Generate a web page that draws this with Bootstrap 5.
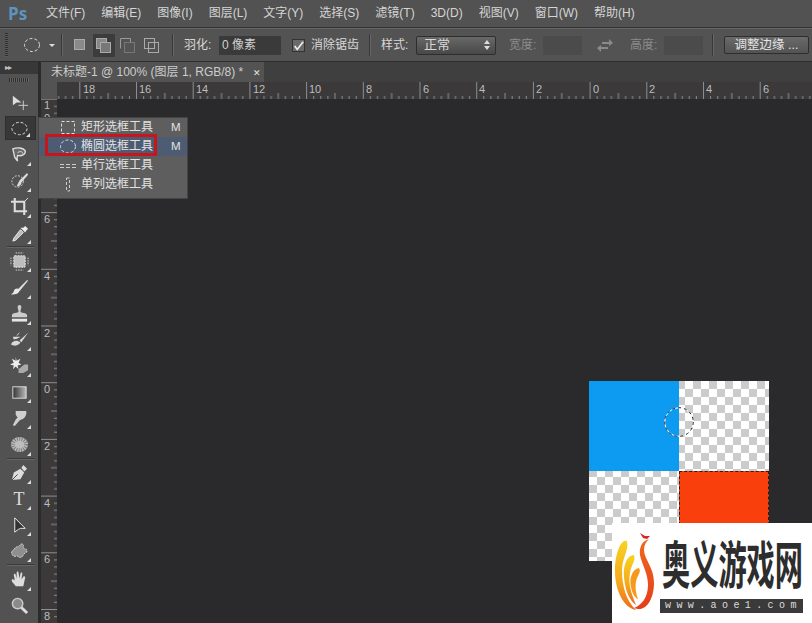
<!DOCTYPE html>
<html lang="zh"><head><meta charset="utf-8"><title>Ps</title>
<link href="https://cdn.jsdelivr.net/npm/bootstrap@5.3.0/dist/css/bootstrap.min.css" rel="stylesheet">
<style>
html,body{margin:0;height:623px;overflow:hidden;background:#2a292b}
.ps-app{width:812px;height:623px;font:12px/1.2 "Liberation Sans","Noto Sans CJK SC",sans-serif;color:#d8d8d8;overflow:hidden;position:relative}
.ps-menubar{height:28px;background:#525252;padding-left:8px;border-bottom:1px solid #333}
.ps-logo{font:bold 17px/1 "Open Sans",sans-serif;color:#5d93bd;width:38px}
.ps-menu{gap:16px;font-size:12px;color:#d5d5d5}
.ps-opts{height:34px;background:#535353;border-top:1px solid #656565;border-bottom:1px solid #2e2e2e;padding-left:5px;color:#d8d8d8}
.ps-grip{width:3px;height:24px;background:repeating-linear-gradient(#2e2e2e 0 1px,#5c5c5c 1px 2px);margin-right:15px}
.ps-arrow{margin-left:7px}
.ps-div{width:2px;height:22px;flex:none;background:#383838;border-right:1px solid #666}
.ps-d1{margin-left:5px}
.ps-o1{margin-left:6px}
.ps-o2,.ps-o3,.ps-o4{margin-left:2px}
.ps-d2{margin-left:9px}
.ps-lbl{font-size:12px;white-space:nowrap;flex:none}
.ps-l1{margin-left:10px;width:35px}
.ps-field{height:19px;width:62px;flex:none;background:#3a3a3a;font-size:12px;padding-left:3px;line-height:19px;color:#d0d0d0}
.ps-dim{color:#8b8b8b}
.ps-field-off{height:19px;width:39px;flex:none;background:#4b4b4b}
.ps-opmode{width:22px;height:23px;flex:none}
.ps-opmode-on{background:#3c3c3c}
.ps-check{width:13px;height:13px;flex:none;background:#6a6a6a;border:1px solid #333;margin-left:11px}
.ps-l2{margin-left:6px;width:48px}
.ps-d3{margin-left:10px}
.ps-l3{margin-left:10px;width:35px}
.ps-select{width:80px;height:19px;flex:none;background:linear-gradient(#686868,#484848);border:1px solid #2e2e2e;border-radius:2px;font-size:13px;padding:0 5px 0 7px}
.ps-l4{margin-left:13px;width:34px}
.ps-sw{margin-left:15px;flex:none}
.ps-l5{margin-left:17px;width:34px}
.ps-d4{margin-left:9px}
.ps-refine{width:85px;height:18px;flex:none;margin-left:10px;background:linear-gradient(#6a6a6a,#535353);border:1px solid #2e2e2e;border-radius:2px;font-size:12.5px;color:#e4e4e4}
.ps-body{height:561px}
.ps-tools{width:41px;background:#525252;border-right:3px solid #2b2b2b}
.ps-toolhead{height:12px;background:#383838;font-size:8px;padding-left:5px;color:#c4c4c4;line-height:11px;letter-spacing:-1px}
.ps-toolgrip{height:4px;margin:4px 9px 0;background:repeating-linear-gradient(90deg,#2c2c2c 0 1px,#666 1px 2px)}
.ps-toollist{padding:0 2px 0 5px;margin-top:7px;height:538px}
.ps-tool{height:26.2px;flex:none;position:relative;padding-right:3px}
.ps-tool svg{width:19px;height:19px;display:block}
.ps-tool::after{content:"";position:absolute;right:5px;bottom:2px;border:2px solid transparent;border-right-color:#ddd;border-bottom-color:#ddd}
.ps-tool.ps-noarrow::after{display:none}
.ps-tool-on{background:#383838;border:1px solid #2f2f2f;height:24.2px;margin:1px 0}
.ps-type{font:18px/1 "Liberation Serif",serif;color:#ddd}
.ps-sep{height:2px;background:#3a3a3a;border-bottom:1px solid #666;margin:0 2px;flex:none}
.ps-main{background:#2a292b;position:relative;min-width:0}
.ps-tabbar{height:20px;background:#3f3f3f}
.ps-tab{width:223px;background:#535353;padding-left:10px;font-size:12px;line-height:20px;color:#cdcdcd;white-space:nowrap}
.ps-tabx{font-size:9px;color:#e6e6e6;margin-left:6px}
.ps-rulers{height:17px}
.ps-corner{width:16px;background:#535353;flex:none}
.ps-hruler{display:block;background:#3b393a;flex:none}
.ps-vruler{display:block;background:#3b393a;width:16px;flex:none}
.ps-view{position:relative;height:524px}
.ps-rtext{font:11px "Liberation Sans",sans-serif;fill:#bdbdbd}
.ps-doc{position:absolute;left:548px;top:282px;width:180px;height:180px;background:repeating-conic-gradient(#cbcbcb 0 25%,#fff 0 50%) 0 0/16px 16px}
.ps-blue{position:absolute;left:0;top:0;width:90px;height:90px;background:#0d9bf2}
.ps-red{position:absolute;left:90px;top:90px;width:90px;height:90px;background:#f93f0b;outline:1px dashed #222;outline-offset:-1px}
.ps-marq{position:absolute;left:75px;top:26px}
.ps-fly{position:absolute;left:38px;top:117px;width:150px;height:82px;background:#5e5e5e;border:1px solid #444;z-index:5;color:#e2e2e2}
.ps-row{height:19px;padding-left:42px;line-height:19px;font-size:12px;white-space:nowrap;position:relative}
.ps-row-on{background:#4d5c73}
.ps-rowicon{position:absolute;left:20px;top:2px;width:18px;height:15px}
.ps-key{margin-left:17px;font-size:11.5px}
.ps-rowtext{width:73px;display:inline-block}
.ps-hl{position:absolute;left:45px;top:134px;width:112px;height:22px;border:3px solid #c4161c;z-index:6}
.ps-mark{position:absolute;left:612px;top:523px;width:200px;height:100px;background:#fff;z-index:7}
.ps-mcol{padding:14px 0 10px}
.ps-marktext{font:700 28.2px/28px "Noto Sans CJK SC",serif;color:#2d2d2d;white-space:nowrap;margin-left:2px;transform:scaleY(1.8);transform-origin:top}
.ps-markurl{width:143px;height:14px;background:#3a3a3a;color:#ddd;font:10px/14px "Liberation Mono",monospace;letter-spacing:5.4px;padding-left:5px;white-space:nowrap;overflow:hidden}
</style></head><body>
<div class="ps-app d-flex flex-column">
  <div class="ps-menubar d-flex align-items-center">
    <div class="ps-logo">Ps</div>
    <div class="ps-menu d-flex">
      <span>文件(F)</span><span>编辑(E)</span><span>图像(I)</span><span>图层(L)</span><span>文字(Y)</span><span>选择(S)</span><span>滤镜(T)</span><span>3D(D)</span><span>视图(V)</span><span>窗口(W)</span><span>帮助(H)</span>
    </div>
  </div>
  <div class="ps-opts d-flex align-items-center">
    <div class="ps-grip"></div>
    <svg width="18" height="16" viewBox="0 0 18 16"><ellipse cx="9" cy="8" rx="7.5" ry="6.5" fill="none" stroke="#ddd" stroke-dasharray="3 2"/></svg>
    <svg class="ps-arrow" width="8" height="6" viewBox="0 0 8 6"><path d="M1 2h6L4 5z" fill="#ddd"/></svg>
    <div class="ps-div ps-d1"></div>
    <div class="ps-opmode ps-o1 d-flex align-items-center justify-content-center"><svg width="12" height="12"><rect x=".5" y=".5" width="10" height="10" fill="#8a8a8a" stroke="#aaa"/></svg></div>
    <div class="ps-opmode ps-o2 ps-opmode-on d-flex align-items-center justify-content-center"><svg width="16" height="15"><rect x=".5" y=".5" width="10" height="10" fill="#888" stroke="#aaa"/><rect x="4.5" y="4.5" width="10" height="10" fill="#777" stroke="#aaa"/></svg></div>
    <div class="ps-opmode ps-o3 d-flex align-items-center justify-content-center"><svg width="16" height="15"><path d="M.5 10.5V.5h10v4" fill="none" stroke="#999"/><rect x="4.5" y="4.5" width="10" height="10" fill="#555" stroke="#777"/></svg></div>
    <div class="ps-opmode ps-o4 d-flex align-items-center justify-content-center"><svg width="16" height="15"><rect x=".5" y=".5" width="10" height="10" fill="none" stroke="#aaa"/><rect x="4.5" y="4.5" width="10" height="10" fill="none" stroke="#aaa"/></svg></div>
    <div class="ps-div ps-d2"></div>
    <span class="ps-lbl ps-l1">羽化:</span>
    <div class="ps-field">0 像素</div>
    <div class="ps-check d-flex"><svg width="13" height="13" viewBox="0 0 13 13"><path d="M2 6l3 4 7-9" fill="none" stroke="#eee" stroke-width="2"/></svg></div>
    <span class="ps-lbl ps-l2">消除锯齿</span>
    <div class="ps-div ps-d3"></div>
    <span class="ps-lbl ps-l3">样式:</span>
    <div class="ps-select d-flex align-items-center justify-content-between"><span>正常</span><svg width="6" height="10" viewBox="0 0 6 10"><path d="M3 0l3 4H0zM3 10l3-4H0z" fill="#ddd"/></svg></div>
    <span class="ps-lbl ps-dim ps-l4">宽度:</span>
    <div class="ps-field-off"></div>
    <svg class="ps-sw" width="16" height="13" viewBox="0 0 16 13"><path d="M5 3h7V0l4 4-4 3V5H5zM11 8H4V6L0 9l4 4v-3h7z" fill="#8a8a8a"/></svg>
    <span class="ps-lbl ps-dim ps-l5">高度:</span>
    <div class="ps-field-off"></div>
    <div class="ps-div ps-d4"></div>
    <div class="ps-refine d-flex align-items-center justify-content-center">调整边缘 ...</div>
  </div>
  <div class="ps-body d-flex">
    <div class="ps-tools flex-shrink-0">
      <div class="ps-toolhead">▸▸</div>
      <div class="ps-toolgrip"></div>
      <div class="ps-toollist d-flex flex-column align-items-stretch">
        <div class="ps-tool ps-noarrow d-flex align-items-center justify-content-center"><svg viewBox="0 0 20 20"><path d="M3 3l9 7H7l-4 3z" fill="#ddd"/><path d="M14 8v10M9 13h10" stroke="#ccc"/></svg></div>
        <div class="ps-tool ps-tool-on d-flex align-items-center justify-content-center"><svg viewBox="0 0 20 20"><ellipse cx="10" cy="10" rx="8" ry="6.5" fill="none" stroke="#e2e2e2" stroke-dasharray="3 2"/></svg></div>
        <div class="ps-tool d-flex align-items-center justify-content-center"><svg viewBox="0 0 20 20"><path d="M3 4c5-2 11-1 13 2 1 4-4 6-8 5-1 2-1 3 0 6L5 13z" fill="#6a6a6a" stroke="#ddd" stroke-width="1.4"/><path d="M8 8c3-2 6-1 5 1" fill="none" stroke="#ddd"/></svg></div>
        <div class="ps-tool d-flex align-items-center justify-content-center"><svg viewBox="0 0 20 20"><circle cx="8" cy="11" r="6" fill="none" stroke="#ddd" stroke-dasharray="2 1.5"/><path d="M18 2L10 10l-3 6c4 0 5-2 5-4l7-8z" fill="#ddd"/></svg></div>
        <div class="ps-tool d-flex align-items-center justify-content-center"><svg viewBox="0 0 20 20"><path d="M5 1v14h13M1 5h14v14" fill="none" stroke="#ddd" stroke-width="2.2"/><path d="M15 5l4-4" stroke="#ddd"/></svg></div>
        <div class="ps-tool d-flex align-items-center justify-content-center"><svg viewBox="0 0 20 20"><path d="M11 6l3 3-8 8-3 1 1-3z" fill="#bbb" stroke="#eee"/><path d="M11 4l5 5 1-2 2-2-3-3-2 2z" fill="#eee"/></svg></div>
        <div class="ps-sep"></div>
        <div class="ps-tool d-flex align-items-center justify-content-center"><svg viewBox="0 0 20 20"><rect x="4" y="4" width="12" height="12" rx="1" fill="#bdbdbd" stroke="#eee" stroke-dasharray="2 1"/><path d="M1 6v8M19 6v8M6 1h8M6 19h8" stroke="#ddd" stroke-dasharray="1.5 1"/></svg></div>
        <div class="ps-tool d-flex align-items-center justify-content-center"><svg viewBox="0 0 20 20"><path d="M18 2L8 12l2 2L19 3z" fill="#ddd"/><path d="M8 11c-3 0-4 2-4 3s-1 2-3 3c5 1 9-1 9-4z" fill="#e8e8e8"/></svg></div>
        <div class="ps-tool d-flex align-items-center justify-content-center"><svg viewBox="0 0 20 20"><path d="M8 3a2 2 0 1 1 4 0c0 2-1 3-1 5 0 2 7 1 7 4v2H2v-2c0-3 7-2 7-4 0-2-1-3-1-5z" fill="#ccc"/><rect x="2" y="15.500" width="16" height="3" fill="#e6e6e6"/></svg></div>
        <div class="ps-tool d-flex align-items-center justify-content-center"><svg viewBox="0 0 20 20"><path d="M19 3L10 11l2 2zM1 15c3-5 7-4 10-2-1 3-6 5-10 2zM3 7h8L8 9 4 10z" fill="#d8d8d8"/><path d="M7 6l3-3" stroke="#ddd"/></svg></div>
        <div class="ps-tool d-flex align-items-center justify-content-center"><svg viewBox="0 0 20 20"><path d="M6 1l1 4 4-2-2 4 3 2-4 1 1 4-3-3-3 3 1-4-4-1 4-2-2-4 4 2z" fill="#eee"/><path d="M9 14l6-5h4v6l-5 3H9z" fill="#aaa"/></svg></div>
        <div class="ps-tool d-flex align-items-center justify-content-center"><svg viewBox="0 0 20 20"><defs><linearGradient id="g1"><stop offset="0" stop-color="#333"/><stop offset="1" stop-color="#bbb"/></linearGradient></defs><rect x="3" y="4" width="14" height="12" fill="url(#g1)" stroke="#ddd"/></svg></div>
        <div class="ps-tool d-flex align-items-center justify-content-center"><svg viewBox="0 0 20 20"><path d="M6 2h11c1 3-1 8-5 9l-2 1-5 6-2-1 3-6 2-2-2-3z" fill="#cfcfcf"/></svg></div>
        <div class="ps-tool d-flex align-items-center justify-content-center"><svg viewBox="0 0 20 20"><ellipse cx="10" cy="10" rx="9" ry="8" fill="#bdbdbd"/><ellipse cx="10" cy="10" rx="7" ry="6" fill="none" stroke="#777" stroke-dasharray="1 1.5" stroke-width="4"/></svg></div>
        <div class="ps-sep"></div>
        <div class="ps-tool d-flex align-items-center justify-content-center"><svg viewBox="0 0 20 20"><path d="M2 18l2-8 7-4 4 4-4 7z" fill="#ddd"/><path d="M12 5l2-3 4 4-3 3z" fill="#ddd"/><path d="M2 18l6-6" stroke="#444"/></svg></div>
        <div class="ps-tool ps-type d-flex align-items-center justify-content-center">T</div>
        <div class="ps-tool d-flex align-items-center justify-content-center"><svg viewBox="0 0 20 20"><path d="M5 2l11 11h-5l-2 1-4 3z" fill="#333" stroke="#eee"/></svg></div>
        <div class="ps-tool d-flex align-items-center justify-content-center"><svg viewBox="0 0 20 20"><path d="M2 10c2-1 3-5 6-5 2 0 2-3 5-3 2 1 0 4 2 5 3 0 4 3 2 4-3 1-3 4-5 5-3 1-3-2-6-1s-5-3-4-5z" fill="#8f8f8f" stroke="#ddd" stroke-dasharray="2 1"/></svg></div>
        <div class="ps-sep"></div>
        <div class="ps-tool d-flex align-items-center justify-content-center"><svg viewBox="0 0 20 20"><path d="M6 17c-2-3-5-5-4-7 1-1 3 1 3 1L4 5c0-2 2-1 2 0l1 4 0-6c0-2 2-2 2 0l1 6 1-5c0-2 2-2 2 0l-1 6 2-3c1-1 2 0 2 1l-2 9z" fill="#ddd"/></svg></div>
        <div class="ps-tool ps-noarrow d-flex align-items-center justify-content-center"><svg viewBox="0 0 20 20"><circle cx="8" cy="8" r="5.500" fill="#8a8a8a" stroke="#ccc" stroke-width="1.500"/><path d="M12 12l6 6" stroke="#ddd" stroke-width="3"/></svg></div>
      </div>
    </div>
    <div class="ps-main flex-grow-1">
      <div class="ps-tabbar d-flex">
        <div class="ps-tab">未标题-1 @ 100% (图层 1, RGB/8) * <span class="ps-tabx">✕</span></div>
      </div>
      <div class="ps-rulers d-flex">
        <div class="ps-corner"></div>
        <svg class="ps-hruler" width="755" height="17" viewBox="0 0 755 17">
          <defs><pattern id="hp" width="56.7" height="17" x="22.3" patternUnits="userSpaceOnUse">
            <path d="M.5 0v17M7.6 14v3M14.7 14v3M21.8 14v3M28.85 11v6M36 14v3M43 14v3M50.1 14v3" stroke="#8d8d8d" fill="none"/></pattern></defs>
          <rect width="755" height="17" fill="url(#hp)"/>
          <g class="ps-rtext"><text x="26" y="11">18</text><text x="82" y="11">16</text><text x="139" y="11">14</text><text x="196" y="11">12</text><text x="252" y="11">10</text><text x="309" y="11">8</text><text x="366" y="11">6</text><text x="422" y="11">4</text><text x="479" y="11">2</text><text x="536" y="11">0</text><text x="592" y="11">2</text><text x="649" y="11">4</text><text x="706" y="11">6</text></g>
        </svg>
      </div>
      <div class="ps-view d-flex">
        <svg class="ps-vruler" width="16" height="524" viewBox="0 0 16 524">
          <defs><pattern id="vp" width="16" height="56.7" y="-0.3" patternUnits="userSpaceOnUse">
            <path d="M0 .5h16M13 7.6h3M13 14.7h3M13 21.8h3M10 28.85h6M13 36h3M13 43h3M13 50.1h3" stroke="#8d8d8d" fill="none"/></pattern></defs>
          <rect width="16" height="524" fill="url(#vp)"/>
          <g class="ps-rtext"><text x="3" y="10">1</text><text x="3" y="23">0</text><text x="3" y="124">6</text><text x="3" y="181">4</text><text x="3" y="238">2</text><text x="3" y="294">0</text><text x="3" y="351">2</text><text x="3" y="408">4</text><text x="3" y="464">6</text><text x="3" y="521">8</text></g>
        </svg>
        <div class="flex-grow-1"></div>
        <div class="ps-doc">
          <div class="ps-blue"></div>
          <div class="ps-red"></div>
          <svg class="ps-marq" width="30" height="30" viewBox="0 0 30 30"><circle cx="15" cy="15" r="14.300" fill="none" stroke="#fff"/><circle cx="15" cy="15" r="14.300" fill="none" stroke="#222" stroke-dasharray="3 3"/></svg>
        </div>
      </div>
    </div>
  </div>

  <div class="ps-fly">
    <div class="ps-row"><svg class="ps-rowicon" viewBox="0 0 18 15"><rect x="2.500" y="1.500" width="13" height="12" fill="none" stroke="#ddd" stroke-dasharray="3 2"/></svg><span class="ps-rowtext">矩形选框工具</span><span class="ps-key">M</span></div>
    <div class="ps-row ps-row-on"><svg class="ps-rowicon" viewBox="0 0 18 15"><ellipse cx="9" cy="7.500" rx="7.500" ry="6.500" fill="none" stroke="#ddd" stroke-dasharray="3 2"/></svg><span class="ps-rowtext">椭圆选框工具</span><span class="ps-key">M</span></div>
    <div class="ps-row"><svg class="ps-rowicon" viewBox="0 0 18 15"><path d="M1 6.500h16M1 9.500h16" stroke="#ccc" stroke-dasharray="4 2"/></svg><span class="ps-rowtext">单行选框工具</span></div>
    <div class="ps-row"><svg class="ps-rowicon" viewBox="0 0 18 15"><rect x="7.500" y="1" width="3" height="13" fill="none" stroke="#ccc" stroke-dasharray="3 2"/></svg><span class="ps-rowtext">单列选框工具</span></div>
  </div>
  <div class="ps-hl"></div>

  <div class="ps-mark d-flex">
    <svg width="48" height="100" viewBox="0 0 48 100" class="flex-shrink-0">
      <defs>
        <linearGradient id="fy" x1="0" y1="0" x2="0" y2="1"><stop offset="0" stop-color="#f7d320"/><stop offset=".6" stop-color="#f5a81c"/><stop offset="1" stop-color="#ee6a1c"/></linearGradient>
        <linearGradient id="fr" x1="0" y1="0" x2="0" y2="1"><stop offset="0" stop-color="#ef6a1c"/><stop offset="1" stop-color="#e63c1c"/></linearGradient>
      </defs>
      <path d="M28 10l5 3h5l-3 3-4-1z" fill="#d6281f"/>
      <path d="M37 16C30 18 27 24 28 32c2 10 8 18 8 30 0 12-6 20-14 23 12 5 20-9 20-25 0-16-10-24-10-33 0-5 2-8 5-11z" fill="url(#fr)"/>
      <path d="M15 18C9 16 3 30 3 48c0 20 9 37 21 39-10-9-14-25-14-39 0-14 7-20 5-30z" fill="url(#fy)"/>
      <path d="M22 32c-7 0-11 10-10 22 1 14 6 24 12 28-5-12-8-22-6-32 1-8 6-12 4-18z" fill="url(#fy)"/>
      <path d="M27 45c-7 1-10 11-8 19 1 6 4 11 7 12-3-8-3-16-1-21 2-4 4-7 2-10z" fill="#f59a1b"/>
    </svg>
    <div class="ps-mcol d-flex flex-column justify-content-between">
      <div class="ps-marktext">奥义游戏网</div>
      <div class="ps-markurl">www.aoe1.com</div>
    </div>
  </div>
</div>
</body></html>
